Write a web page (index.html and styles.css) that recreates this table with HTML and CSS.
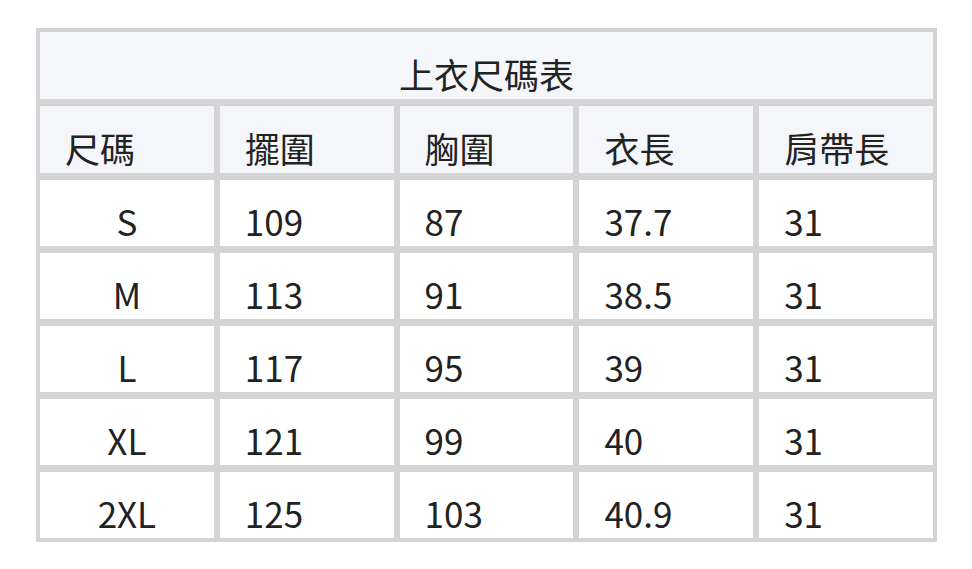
FILE: index.html
```html
<!DOCTYPE html>
<html lang="zh-Hant">
<head>
<meta charset="utf-8">
<title>上衣尺碼表</title>
<link rel="stylesheet" href="styles.css">
</head>
<body>
<div class="size-table">
  <div class="cell title">上衣尺碼表</div>
  <div class="cell head">尺碼</div>
  <div class="cell head">擺圍</div>
  <div class="cell head">胸圍</div>
  <div class="cell head">衣長</div>
  <div class="cell head">肩帶長</div>

  <div class="cell size">S</div>
  <div class="cell">109</div>
  <div class="cell">87</div>
  <div class="cell">37.7</div>
  <div class="cell">31</div>

  <div class="cell size">M</div>
  <div class="cell">113</div>
  <div class="cell">91</div>
  <div class="cell">38.5</div>
  <div class="cell">31</div>

  <div class="cell size">L</div>
  <div class="cell">117</div>
  <div class="cell">95</div>
  <div class="cell">39</div>
  <div class="cell">31</div>

  <div class="cell size">XL</div>
  <div class="cell">121</div>
  <div class="cell">99</div>
  <div class="cell">40</div>
  <div class="cell">31</div>

  <div class="cell size">2XL</div>
  <div class="cell">125</div>
  <div class="cell">103</div>
  <div class="cell">40.9</div>
  <div class="cell">31</div>
</div>
</body>
</html>
```

FILE: styles.css
```css
html, body {
  margin: 0;
  padding: 0;
  background: #ffffff;
}

body {
  padding: 28px 0 0 36px;
  font-family: "Noto Sans CJK TC", "Noto Sans", sans-serif;
  color: #222222;
}

.size-table {
  box-sizing: border-box;
  width: 901px;
  display: grid;
  grid-template-columns: repeat(5, 1fr);
  grid-template-rows: 67px 67px repeat(5, 66px);
  column-gap: 6px;
  row-gap: 7px;
  padding: 4px;
  background: #d4d4d4;
}

.cell {
  display: flex;
  align-items: flex-end;
  justify-content: flex-start;
  box-sizing: border-box;
  padding: 0 0 8px 25px;
  background: #ffffff;
  font-size: 35px;
  line-height: 1;
}

.title {
  grid-column: 1 / -1;
  justify-content: center;
  padding-left: 0;
  background: #f5f6fa;
}

.head {
  background: #f5f6fa;
}

.size {
  justify-content: center;
  padding-left: 0;
}
```
